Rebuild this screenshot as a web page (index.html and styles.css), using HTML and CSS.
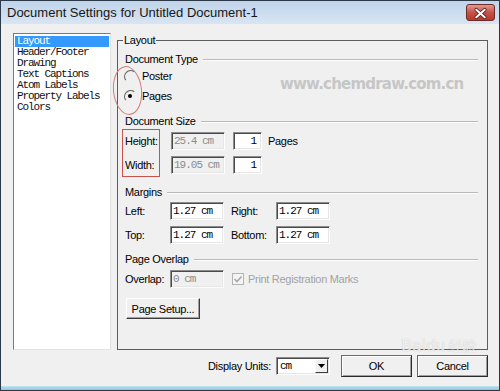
FILE: index.html
```html
<!DOCTYPE html>
<html>
<head>
    <meta charset="utf-8" />
    <title>Document Settings</title>
    <link rel="stylesheet" href="styles.css">
</head>
<body>
    <div class="window">
        <div class="titlebar">
            <span class="title">Document Settings for Untitled Document-1</span>
            <span class="close">
                <svg width="29" height="17" viewBox="0 0 29 17">
                    <path d="M10 4.5 L19 12.5 M19 4.5 L10 12.5" stroke="#5a1d18" stroke-width="4" stroke-linecap="round"/>
                    <path d="M10 4.5 L19 12.5 M19 4.5 L10 12.5" stroke="#fff" stroke-width="2.2" stroke-linecap="round"/>
                </svg>
            </span>
        </div>

        <div class="client">
            <div class="main">
                <ul class="categories">
                    <li class="selected">Layout</li>
                    <li>Header/Footer</li>
                    <li>Drawing</li>
                    <li>Text Captions</li>
                    <li>Atom Labels</li>
                    <li>Property Labels</li>
                    <li>Colors</li>
                </ul>

                <div class="group">
                    <span class="group-title">Layout</span>

                    <div class="heading first">Document Type</div>
                    <div class="radio-row">
                        <svg class="radio" width="12" height="12" viewBox="0 0 12 12">
                            <path d="M10.2 1.8 A6 6 0 0 0 1.8 10.2" fill="none" stroke="#6a6a6a" stroke-width="1.2"/>
                        </svg>
                        <span>Poster</span>
                    </div>
                    <div class="radio-row">
                        <svg class="radio" width="12" height="12" viewBox="0 0 12 12">
                            <path d="M10.2 1.8 A6 6 0 0 0 1.8 10.2" fill="none" stroke="#6a6a6a" stroke-width="1.2"/>
                            <circle cx="6" cy="6" r="2" fill="#000"/>
                        </svg>
                        <span>Pages</span>
                    </div>

                    <div class="heading">Document Size</div>
                    <div class="size-block">
                        <div class="size-labels">
                            <span>Height:</span>
                            <span>Width:</span>
                        </div>
                        <div class="size-fields">
                            <div class="size-row">
                                <span class="field disabled">25.4 cm</span>
                                <span class="field count">1</span>
                                <span>Pages</span>
                            </div>
                            <div class="size-row">
                                <span class="field disabled">19.05 cm</span>
                                <span class="field count">1</span>
                            </div>
                        </div>
                    </div>

                    <div class="heading">Margins</div>
                    <div class="margins">
                        <span>Left:</span>
                        <span class="field">1.27 cm</span>
                        <span class="second">Right:</span>
                        <span class="field">1.27 cm</span>
                        <span>Top:</span>
                        <span class="field">1.27 cm</span>
                        <span class="second">Bottom:</span>
                        <span class="field">1.27 cm</span>
                    </div>

                    <div class="heading">Page Overlap</div>
                    <div class="overlap-row">
                        <span class="overlap-label">Overlap:</span>
                        <span class="field disabled">0 cm</span>
                        <svg class="check" width="12" height="12" viewBox="0 0 12 12">
                            <rect x="0.5" y="0.5" width="11" height="11" fill="#f4f4f4" stroke="#b4b4b4"/>
                            <path d="M2.5 6 L5 8.5 L9.5 3.5" fill="none" stroke="#a8a8a8" stroke-width="1.6"/>
                        </svg>
                        <span class="muted">Print Registration Marks</span>
                    </div>

                    <button class="btn setup">Page Setup...</button>
                </div>
            </div>

            <div class="footer">
                <span>Display Units:</span>
                <span class="field select">
                    <span class="select-value">cm</span>
                    <span class="select-arrow">
                        <svg width="7" height="4" viewBox="0 0 7 4"><path d="M0 0 H7 L3.5 4 Z" fill="#000"/></svg>
                    </span>
                </span>
                <button class="btn ok">OK</button>
                <button class="btn cancel">Cancel</button>
            </div>
        </div>
        <div class="frame-bottom"></div>

        <span class="watermark">www.chemdraw.com.cn</span>
        <span class="mark-ellipse"></span>
        <span class="baidu">Bai<span class="baidu-du">du</span><span class="baidu-cn">经验</span></span>
    </div>
</body>
</html>
```

FILE: styles.css
```css
* {
    box-sizing: border-box;
}

body {
    margin: 0;
    background: #fff;
    font-family: "Liberation Sans", Arial, sans-serif;
    font-size: 11px;
    letter-spacing: -0.3px;
    color: #000;
}

.window {
    position: relative;
    width: 500px;
    height: 391px;
    border: 1px solid #2c3a48;
    background: #f0f0f0;
    display: flex;
    flex-direction: column;
    overflow: hidden;
}

/* title bar */

.titlebar {
    flex: none;
    height: 23px;
    display: flex;
    align-items: flex-start;
    padding: 0 4px 0 6px;
    background: linear-gradient(#bfd4eb, #d8e5f3);
}

.title {
    flex: 1;
    margin-top: 4px;
    font-size: 13px;
    letter-spacing: 0;
    color: #161616;
}

.close {
    margin-top: 3px;
    width: 29px;
    height: 17px;
    border: 1px solid #6d2b25;
    border-radius: 3px;
    background: linear-gradient(#e29a8e, #c4544a 50%, #b8382d);
    display: flex;
}

/* body */

.client {
    flex: 1;
    padding: 9px 11px 0 12px;
}

.main {
    height: 317px;
    display: flex;
}

.categories {
    list-style: none;
    margin: 0;
    padding: 2px 1px;
    width: 98px;
    background: #fff;
    border: 1px solid;
    border-color: #7a7a7a #e2e2e2 #e2e2e2 #7a7a7a;
    font-family: "Liberation Mono", "Courier New", monospace;
    font-size: 11px;
    letter-spacing: -1.1px;
}

.categories li {
    height: 11px;
    line-height: 11px;
    padding-left: 2px;
    color: #111;
}

.categories li.selected {
    background: #3399ff;
    color: #fff;
}

.group {
    position: relative;
    flex: 1;
    margin: 7px 0 0 6px;
    padding: 0 9px 0 7px;
    border: 1px solid #5c5c5c;
}

.group-title {
    position: absolute;
    top: -7px;
    left: 5px;
    padding: 0 1px;
    line-height: 13px;
    background: #f0f0f0;
}

.heading {
    height: 14px;
    margin-top: 8px;
    display: flex;
    align-items: center;
    gap: 5px;
    white-space: nowrap;
}

.heading::after {
    content: "";
    flex: 1;
    height: 1px;
    background: #b9b9b9;
    box-shadow: 0 1px #fff;
}

.heading.first {
    margin-top: 11px;
}

.radio-row {
    height: 20px;
    display: flex;
    align-items: center;
    gap: 6px;
}

.radio-row:first-of-type {
    margin-top: 1px;
}

.radio {
    margin-left: -1px;
}

/* document size */

.size-block {
    margin-top: 1px;
    display: flex;
}

.size-labels {
    width: 38px;
    margin-left: -3px;
    padding: 2px;
    border: 1px solid #c9524c;
    display: flex;
    flex-direction: column;
    gap: 6px;
}

.size-labels span {
    height: 18px;
    line-height: 18px;
}

.size-fields {
    margin-left: 11px;
    padding-top: 3px;
    display: flex;
    flex-direction: column;
    gap: 6px;
}

.size-row {
    display: flex;
    align-items: center;
    gap: 8px;
}

.size-row .count {
    width: 29px;
    text-align: right;
    padding-right: 5px;
    margin-right: -2px;
}

/* fields */

.field {
    display: block;
    width: 54px;
    height: 18px;
    line-height: 16px;
    padding-left: 2px;
    background: #fff;
    border: 1px solid;
    border-color: #8c8c8c #fdfdfd #fdfdfd #8c8c8c;
    box-shadow: inset 1px 1px #4a4a4a, inset -1px -1px #e6e6e6;
    font-family: "Liberation Mono", "Courier New", monospace;
    font-size: 11px;
    letter-spacing: -1px;
    white-space: nowrap;
}

.field.disabled {
    background: #f0f0f0;
    color: #8c8c8c;
}

.margins {
    margin-top: 3px;
    display: grid;
    grid-template-columns: 45px 54px 52px 54px;
    grid-auto-rows: 18px;
    row-gap: 6px;
    align-items: center;
}

.margins .second {
    padding-left: 7px;
}

.overlap-row {
    margin-top: 4px;
    display: flex;
    align-items: center;
}

.overlap-label {
    width: 45px;
}

.check {
    margin: 0 0 0 8px;
}

.muted {
    margin-left: 4px;
    color: #a3a3a3;
}

.btn {
    display: block;
    height: 21px;
    padding: 0;
    background: #f0f0f0;
    border: 1px solid;
    border-color: #fff #3c3c3c #3c3c3c #fff;
    box-shadow: inset -1px -1px #a0a0a0;
    font-family: "Liberation Sans", Arial, sans-serif;
    font-size: 11px;
    letter-spacing: -0.3px;
    color: #000;
}

.setup {
    margin: 10px 0 0 1px;
    width: 74px;
}

/* footer */

.footer {
    height: 22px;
    margin-top: 5px;
    display: flex;
    justify-content: flex-end;
    align-items: center;
}

.select {
    display: flex;
    margin-left: 5px;
    padding-left: 3px;
}

.select-value {
    flex: 1;
}

.select-arrow {
    width: 13px;
    height: 14px;
    margin: 1px 1px 0 0;
    background: #f0f0f0;
    border: 1px solid;
    border-color: #fff #3c3c3c #3c3c3c #fff;
    display: flex;
    align-items: center;
    justify-content: center;
}

.ok,
.cancel {
    width: 71px;
    height: 22px;
    border-color: #6a6a6a #2a2a2a #2a2a2a #6a6a6a;
    box-shadow: inset 1px 1px #fff, inset -1px -1px #a0a0a0;
}

.ok {
    margin-left: 11px;
}

.cancel {
    margin-left: 5px;
}

.frame-bottom {
    flex: none;
    height: 4px;
    background: linear-gradient(#bfe3ee, #8fc6dc);
}

/* overlays */

.watermark {
    position: absolute;
    left: 279px;
    top: 74px;
    font-family: "DejaVu Sans", sans-serif;
    font-weight: bold;
    font-size: 15px;
    letter-spacing: -0.8px;
    color: #c6c6c6;
}

.mark-ellipse {
    position: absolute;
    left: 112px;
    top: 65px;
    width: 29px;
    height: 49px;
    border: 1px solid #d27a7a;
    border-radius: 50%;
    transform: rotate(-6deg);
}

.baidu {
    position: absolute;
    left: 400px;
    top: 334px;
    font-family: "DejaVu Sans", sans-serif;
    font-size: 16px;
    letter-spacing: 0;
    color: rgba(255, 255, 255, 0.75);
    text-shadow: 0 0 1px rgba(150, 150, 150, 0.6);
}

.baidu-du {
    font-size: 15px;
}

.baidu-cn {
    font-family: "Noto Sans CJK SC", sans-serif;
    font-size: 14px;
    margin-left: 3px;
}
```
